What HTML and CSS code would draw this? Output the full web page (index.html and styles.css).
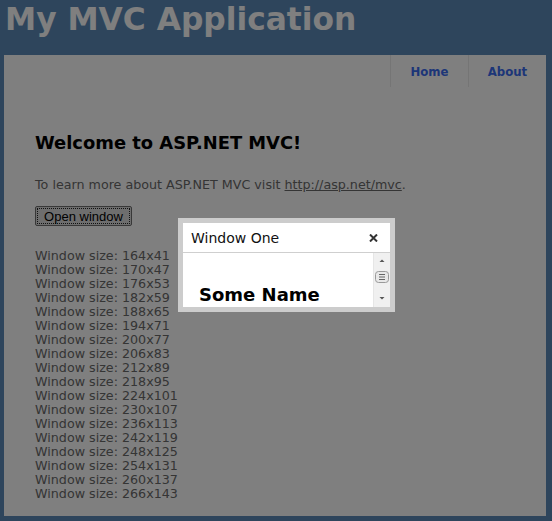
FILE: index.html
```html
<!DOCTYPE html>
<html>
<head>
  <title>My MVC Application</title>
  <link rel="stylesheet" href="styles.css">
</head>
<body>
  <div class="page">
    <div class="header">
      <h1 class="title">My MVC Application</h1>
    </div>
    <div class="main">
      <ul class="menu">
        <li><a href="#">Home</a></li>
        <li><a href="#">About</a></li>
      </ul>
      <h2 class="welcome">Welcome to ASP.NET MVC!</h2>
      <p class="intro">To learn more about ASP.NET MVC visit <a href="#">http://asp.net/mvc</a>.</p>
      <button class="open-btn"><span class="focus">Open window</span></button>
      <div class="log">
        <div>Window size: 164x41</div>
        <div>Window size: 170x47</div>
        <div>Window size: 176x53</div>
        <div>Window size: 182x59</div>
        <div>Window size: 188x65</div>
        <div>Window size: 194x71</div>
        <div>Window size: 200x77</div>
        <div>Window size: 206x83</div>
        <div>Window size: 212x89</div>
        <div>Window size: 218x95</div>
        <div>Window size: 224x101</div>
        <div>Window size: 230x107</div>
        <div>Window size: 236x113</div>
        <div>Window size: 242x119</div>
        <div>Window size: 248x125</div>
        <div>Window size: 254x131</div>
        <div>Window size: 260x137</div>
        <div>Window size: 266x143</div>
      </div>
    </div>
  </div>

  <!-- modal overlay + dialog -->
  <div class="overlay"></div>
  <div class="dialog">
    <div class="dialog-title">
      <span>Window One</span>
      <svg class="close" width="9" height="8" viewBox="0 0 9 8">
        <path d="M1 0.5 L8 7.5 M8 0.5 L1 7.5" stroke="#333" stroke-width="2" fill="none"/>
      </svg>
    </div>
    <div class="dialog-body">
      <div class="dialog-content">
        <h2 class="name">Some Name</h2>
      </div>
      <div class="scrollbar">
        <svg width="16" height="54" viewBox="0 0 16 54">
          <path d="M5.5 9 L10.5 9 L8 6.5 Z" fill="#555"/>
          <rect x="1.5" y="18.5" width="13" height="11" rx="3" fill="#e8e8e8" stroke="#9a9a9a"/>
          <path d="M5 21.5 H11 M5 24 H11 M5 26.5 H11" stroke="#666" stroke-width="1"/>
          <path d="M5.5 44 L10.5 44 L8 46.5 Z" fill="#555"/>
        </svg>
      </div>
    </div>
  </div>
</body>
</html>
```

FILE: styles.css
```css
body {
  margin: 0;
  background-color: #5c8ab8;
  font-family: "DejaVu Sans", Verdana, sans-serif;
  font-size: 13px;
  color: #6a6a6a;
}

.header {
  height: 55px;
}

.title {
  margin: 0;
  padding: 0 0 0 5px;
  font-size: 31.3px;
  line-height: 38px;
  font-weight: bold;
  color: #fff;
}

.main {
  background-color: #fff;
  margin: 0 6px 0 4px;
  padding: 0 30px 15px 31px;
}

.menu {
  list-style: none;
  margin: 0 -30px 0 0;
  padding: 0;
  display: flex;
  justify-content: flex-end;
  height: 32px;
}

.menu li {
  width: 78px;
  border-left: 1px solid #ebebeb;
  display: flex;
  justify-content: center;
  padding-top: 9px;
  box-sizing: border-box;
}

.menu a {
  font-family: "DejaVu Sans Condensed", "Liberation Sans", sans-serif;
  font-weight: bold;
  font-size: 13px;
  color: #3a6cf0;
  text-decoration: none;
}

.welcome {
  margin: 45px 0 0;
  font-size: 17.9px;
  line-height: 22px;
  color: #000;
}

.intro {
  margin: 23px 0 0;
  font-size: 12.7px;
  line-height: 16px;
}

.intro a {
  color: #6a6a6a;
}

.open-btn {
  margin-top: 13px;
  height: 20px;
  width: 97px;
  padding: 1px;
  background-color: #dcdcdc;
  border: 1px solid #707070;
  border-radius: 2px;
  font-family: "Liberation Sans", Arial, sans-serif;
  font-size: 13px;
  color: #000;
  display: block;
}

.open-btn .focus {
  display: block;
  height: 16px;
  line-height: 15px;
  border: 1px dotted #222;
  box-sizing: border-box;
}

.log {
  margin-top: 23px;
  line-height: 14px;
  font-size: 12.7px;
}

.overlay {
  position: fixed;
  inset: 0;
  background: rgba(0, 0, 0, 0.5);
}

.dialog {
  position: absolute;
  left: 178px;
  top: 218px;
  width: 207px;
  height: 84px;
  border: 5px solid #cccccc;
  background: #fff;
  font-family: "DejaVu Sans", Verdana, sans-serif;
}

.dialog-title {
  height: 29px;
  border-bottom: 1px solid #cfcfcf;
  display: flex;
  align-items: center;
  justify-content: space-between;
  padding: 0 12px 0 8px;
  font-size: 14px;
  color: #111;
}

.dialog-body {
  display: flex;
  height: 54px;
  overflow: hidden;
}

.dialog-content {
  flex: 1;
  padding-left: 16px;
}

.name {
  margin: 31px 0 0;
  font-size: 18px;
  line-height: 22px;
  color: #000;
}

.scrollbar {
  width: 16px;
  background: #f0f0f0;
  border-left: 1px solid #e6e6e6;
}

.scrollbar svg {
  display: block;
}
```
